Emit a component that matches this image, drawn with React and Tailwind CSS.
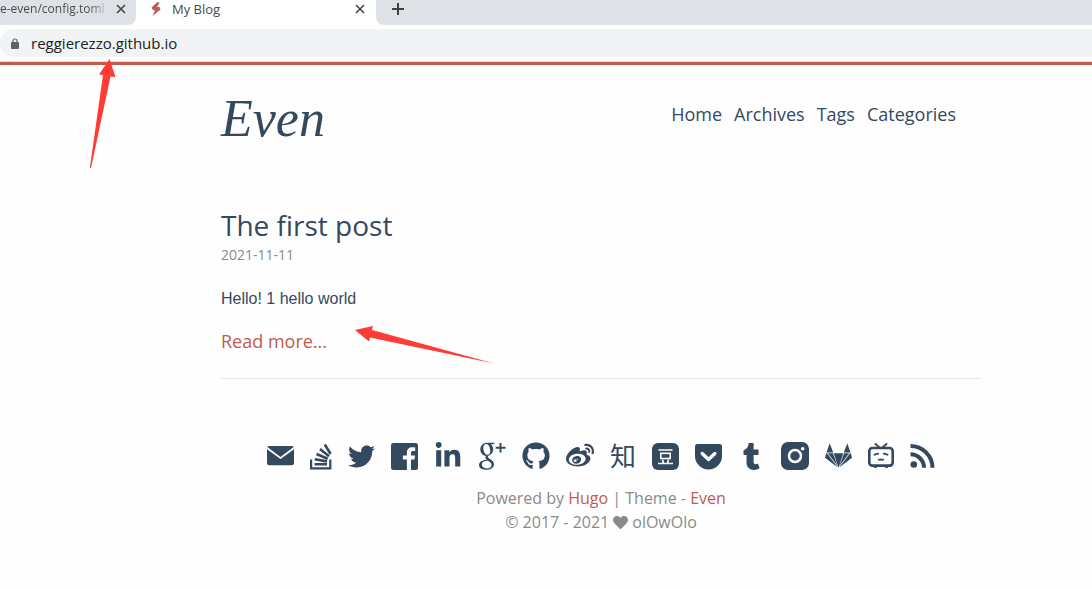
import {
  FaTwitter,
  FaLinkedinIn,
  FaGithub,
  FaWeibo,
  FaTumblr,
  FaHeart,
} from "react-icons/fa";

const navItems = ["Home", "Archives", "Tags", "Categories"];

function Envelope() {
  return (
    <svg viewBox="0 0 27 20" className="h-5 w-[27px]" fill="currentColor">
      <path d="M2 0h23a2 2 0 0 1 1.700 1L13.500 11 .3 1A2 2 0 0 1 2 0z" />
      <path d="M0 3.200 13.500 13 27 3.200V17a2.200 2.200 0 0 1-2.200 2.200H2.200A2.200 2.200 0 0 1 0 17z" />
    </svg>
  );
}

function StackOverflow() {
  return (
    <svg viewBox="0 0 22 27" className="h-[27px] w-[22px]" fill="none" stroke="currentColor" strokeWidth="2.600">
      <path d="M1.100 16.500V25.300H20.300V16.500" strokeWidth="2.200" />
      <path d="M4.500 21.300H17M4.800 16.200 17 18.400M6.500 11 17.700 15.700M10 6 19 13.200M14.800 1.500 20.600 11" />
    </svg>
  );
}

function Facebook() {
  return (
    <svg viewBox="0 0 27 27" className="size-[27px]" fill="currentColor">
      <path d="M2.500 0h22A2.500 2.500 0 0 1 27 2.500v22a2.500 2.500 0 0 1-2.500 2.500H20V16.500h3.500l.5-4h-4V10c0-1.300.5-2 2-2h2.200V4.400c-.6-.1-1.700-.2-3-.2-3.200 0-5.300 1.900-5.300 5.400v2.900h-4v4h4V27H2.500A2.500 2.500 0 0 1 0 24.500v-22A2.500 2.500 0 0 1 2.500 0z" />
    </svg>
  );
}

function GooglePlus() {
  return (
    <svg viewBox="0 0 28 28" className="size-7" fill="currentColor">
      <path
        fillRule="evenodd"
        d="M9 .8H17.300L15 2.300H12.800C14.400 3.600 15.200 5.300 15.200 7.300 15.200 11.200 12.300 14 8.600 14 5 14 2.300 11.200 2.300 7.600 2.300 3.700 5.200.8 9 .8ZM8.300 2C6.300 2.100 5.200 3.700 5.300 6.200 5.500 9.700 7.200 12.800 9.600 12.800 11.500 12.700 12.500 11.200 12.300 8.800 12 5 10.400 1.900 8.300 2Z"
      />
      <path
        fillRule="evenodd"
        d="M8.500 13.200 10.800 13.500C9.500 14.700 9.700 15.400 11.500 16.700 14.500 18.700 16 19.800 16 22.200 16 25.400 12.700 27.800 7.900 27.800 3.700 27.800 1 25.900 1 23.100 1 19.800 4.300 17.800 9 17.700 7 16.200 6.800 14.800 8.500 13.200ZM9.800 18.800C6.200 18.800 3.800 20.300 3.800 22.600 3.800 24.900 5.800 26.400 8.800 26.400 11.800 26.400 13.500 25.100 13.500 22.900 13.500 21.300 12.400 20.400 9.800 18.800Z"
      />
      <path d="M22.500 1V10.500M17.700 5.700H27.500" stroke="currentColor" strokeWidth="1.900" />
    </svg>
  );
}

function Douban() {
  return (
    <svg viewBox="0 0 27 27" className="size-[27px]">
      <rect width="27" height="27" rx="6" fill="currentColor" />
      <g fill="none" stroke="#fefefe" strokeWidth="1.600">
        <path d="M6.500 7H20.500M6 20.500H21M10.500 16.500 11.500 20.500M16.500 16.500 15.500 20.500" />
        <rect x="8.800" y="10.300" width="9.400" height="5.200" />
      </g>
    </svg>
  );
}

function Pocket() {
  return (
    <svg viewBox="0 0 27 27" className="size-[27px]">
      <path d="M2.500 1h22A2.500 2.500 0 0 1 27 3.500V13A13.500 13.500 0 0 1 0 13V3.500A2.500 2.500 0 0 1 2.500 1z" fill="currentColor" />
      <path d="M7.200 10.500 13.500 16.500 19.800 10.500" fill="none" stroke="#fefefe" strokeWidth="3.400" strokeLinecap="round" strokeLinejoin="round" />
    </svg>
  );
}

function Instagram() {
  return (
    <svg viewBox="0 0 28 28" className="size-7">
      <rect width="28" height="28" rx="7" fill="currentColor" />
      <circle cx="14" cy="14" r="6" fill="none" stroke="#fefefe" strokeWidth="2.500" />
      <circle cx="21.700" cy="6.700" r="1.800" fill="#fefefe" />
    </svg>
  );
}

function Gitlab() {
  return (
    <svg viewBox="0 0 27 26" className="h-[26px] w-[27px]" fill="currentColor">
      <path d="M4.700.3 8.200 9.500H1.500zM22.300.3 18.800 9.500H25.500z" />
      <path d="M1.200 10.200 0 14.700 12.800 24.500 2 10.200zM25.800 10.200 27 14.700 14.200 24.500 25 10.200z" />
      <path d="M2.900 10.200H7.900L12.700 23.300zM24.100 10.200H19.100L14.300 23.300zM8.700 10.200H18.300L13.500 24.800z" />
    </svg>
  );
}

function Bilibili() {
  return (
    <svg viewBox="0 0 26 26" className="size-[26px]" fill="none" stroke="currentColor" strokeWidth="2" strokeLinecap="round">
      <path d="M7.500 1 11.500 4.500M18.500 1 14.500 4.500" strokeWidth="1.900" />
      <rect x="1.300" y="5" width="23.400" height="17.600" rx="3" strokeWidth="2.600" />
      <path d="M6.500 11.700 10.200 10.700M19.500 11.700 15.800 10.700" strokeWidth="1.900" />
      <path d="M10.500 16.300Q11.800 17.800 13 16.300Q14.200 17.800 15.500 16.300" strokeWidth="1.500" />
      <path d="M7 24.100H8M18 24.100H19" />
    </svg>
  );
}

function Feed() {
  return (
    <svg viewBox="0 0 25 25" className="size-[25px]" fill="none" stroke="currentColor" strokeWidth="4">
      <circle cx="3.800" cy="20.500" r="3.300" fill="currentColor" stroke="none" />
      <path d="M.5 10.300A13.500 13.500 0 0 1 14 23.800M.5 2A22 22 0 0 1 22.500 23.800" />
    </svg>
  );
}

const socials = [
  { name: "Email", icon: <Envelope /> },
  { name: "Stack Overflow", icon: <StackOverflow /> },
  { name: "Twitter", icon: <FaTwitter className="size-[27px]" /> },
  { name: "Facebook", icon: <Facebook /> },
  { name: "LinkedIn", icon: <FaLinkedinIn className="size-7" /> },
  { name: "Google Plus", icon: <GooglePlus /> },
  { name: "GitHub", icon: <FaGithub className="size-7" /> },
  { name: "Weibo", icon: <FaWeibo className="size-7" /> },
  { name: "Zhihu", icon: <span className="font-['Noto_Sans_CJK_SC',sans-serif] text-[26px] leading-7">知</span> },
  { name: "Douban", icon: <Douban /> },
  { name: "Pocket", icon: <Pocket /> },
  { name: "Tumblr", icon: <FaTumblr className="size-[27px]" /> },
  { name: "Instagram", icon: <Instagram /> },
  { name: "GitLab", icon: <Gitlab /> },
  { name: "Bilibili", icon: <Bilibili /> },
  { name: "RSS", icon: <Feed /> },
];

function Cross() {
  return (
    <svg viewBox="0 0 10 10" className="size-[10px]" fill="none" stroke="currentColor" strokeWidth="1.700">
      <path d="M1 1 9 9M9 1 1 9" />
    </svg>
  );
}

function BrowserChrome() {
  return (
    <div className="text-[13px] text-[#45494d]">
      <div className="flex h-[25px] bg-white">
        <div className="flex w-[136px] items-center justify-between rounded-br-lg bg-[#dee1e6] pr-[10px] pb-2">
          <span className="bg-linear-to-r from-[#45494d] from-85% to-[#45494d]/20 bg-clip-text text-xs leading-5 whitespace-nowrap text-transparent">
            e-even/config.toml
          </span>
          <button aria-label="Close config tab"><Cross /></button>
        </div>
        <div className="flex w-60 items-center pr-[11px] pb-2 pl-[14px]">
          <svg viewBox="0 0 12 14" className="h-[14px] w-3" fill="#c05b4d">
            <path d="M7.500 0 1.500 5.500 3 8.300H5L2.500 14 10.500 7.500 9.500 5H7L9.500 1z" />
          </svg>
          <span className="ml-[10px] flex-1 leading-5">My Blog</span>
          <button aria-label="Close My Blog tab"><Cross /></button>
        </div>
        <div className="flex flex-1 items-center rounded-bl-lg bg-[#dee1e6] pb-2 pl-4">
          <button aria-label="New tab">
            <svg viewBox="0 0 12 12" className="size-3" fill="none" stroke="#3c4043" strokeWidth="2">
              <path d="M6 0V12M0 6H12" />
            </svg>
          </button>
        </div>
      </div>
      <div className="border-b border-[#dadce0] bg-white pt-1 pb-1">
        <label className="flex h-7 items-center gap-3 rounded-l-full bg-[#f1f3f4] pl-[11px]">
          <svg viewBox="0 0 8 11" className="h-[11px] w-2" fill="#5f6368">
            <rect y="4" width="8" height="7" rx="1" />
            <path d="M2 4.500V3A2 2 0 0 1 6 3V4.500" fill="none" stroke="#5f6368" strokeWidth="1.200" />
          </svg>
          <input
            aria-label="Address"
            defaultValue="reggierezzo.github.io"
            className="min-w-0 flex-1 bg-transparent text-[15px] text-[#202124] outline-none"
          />
        </label>
      </div>
    </div>
  );
}

export default function App() {
  return (
    <div className="relative min-h-screen bg-[#fefefe] font-['Open_Sans',sans-serif] text-[#34495e]">
      <BrowserChrome />
      <div className="border-t-[3px] border-[#c05b4d] pr-[111px] pl-[221px]">
        <header className="flex items-start justify-between pt-6 pr-[25px]">
          <a href="#" className="font-['Liberation_Serif',serif] text-[52px] leading-[60px] italic">Even</a>
          <nav className="flex gap-3 pt-[13px] text-lg leading-6">
            {navItems.map((item) => (
              <a key={item} href="#">{item}</a>
            ))}
          </nav>
        </header>

        <main className="mt-14 border-b border-[#e6e6e6] pb-[25px]">
          <h1 className="text-[28px] leading-10">
            <a href="#">The first post</a>
          </h1>
          <time className="block text-sm leading-5 text-[#8a8a8a]">2021-11-11</time>
          <p className="mt-[22px] font-['Liberation_Sans',sans-serif] text-base leading-6">Hello! 1 hello world</p>
          <a href="#" className="mt-[18px] block text-lg leading-6 text-[#c05b4d]">Read more...</a>
        </main>

        <footer className="flex flex-col items-center pt-[63px] pb-14 text-base leading-6 text-[#8a8a8a]">
          <div className="flex h-7 items-center gap-4 text-[#34495e]">
            {socials.map(({ name, icon }) => (
              <a key={name} href="#" aria-label={name} className="block">{icon}</a>
            ))}
          </div>
          <p className="mt-4">
            Powered by <a href="#" className="text-[#c05b4d]">Hugo</a> | Theme - <a href="#" className="text-[#c05b4d]">Even</a>
          </p>
          <p className="flex items-center gap-1">
            <span>© 2017 - 2021</span>
            <FaHeart className="size-[15px]" />
            <span>olOwOlo</span>
          </p>
        </footer>
      </div>

      <svg className="pointer-events-none absolute top-[59px] left-[89px] h-[110px] w-7" viewBox="0 0 28 110" fill="#ff3b36">
        <path d="M20.500 0 26.500 18 21.500 17.500 2 109H.8L14 16 10 15.500z" />
      </svg>
      <svg className="pointer-events-none absolute top-[325px] left-[355px] h-10 w-[140px]" viewBox="0 0 140 40" fill="#ff3b36">
        <path d="M0 5 18 1 17 5 139 38.500 15 12.500 14 16.500z" />
      </svg>
    </div>
  );
}
